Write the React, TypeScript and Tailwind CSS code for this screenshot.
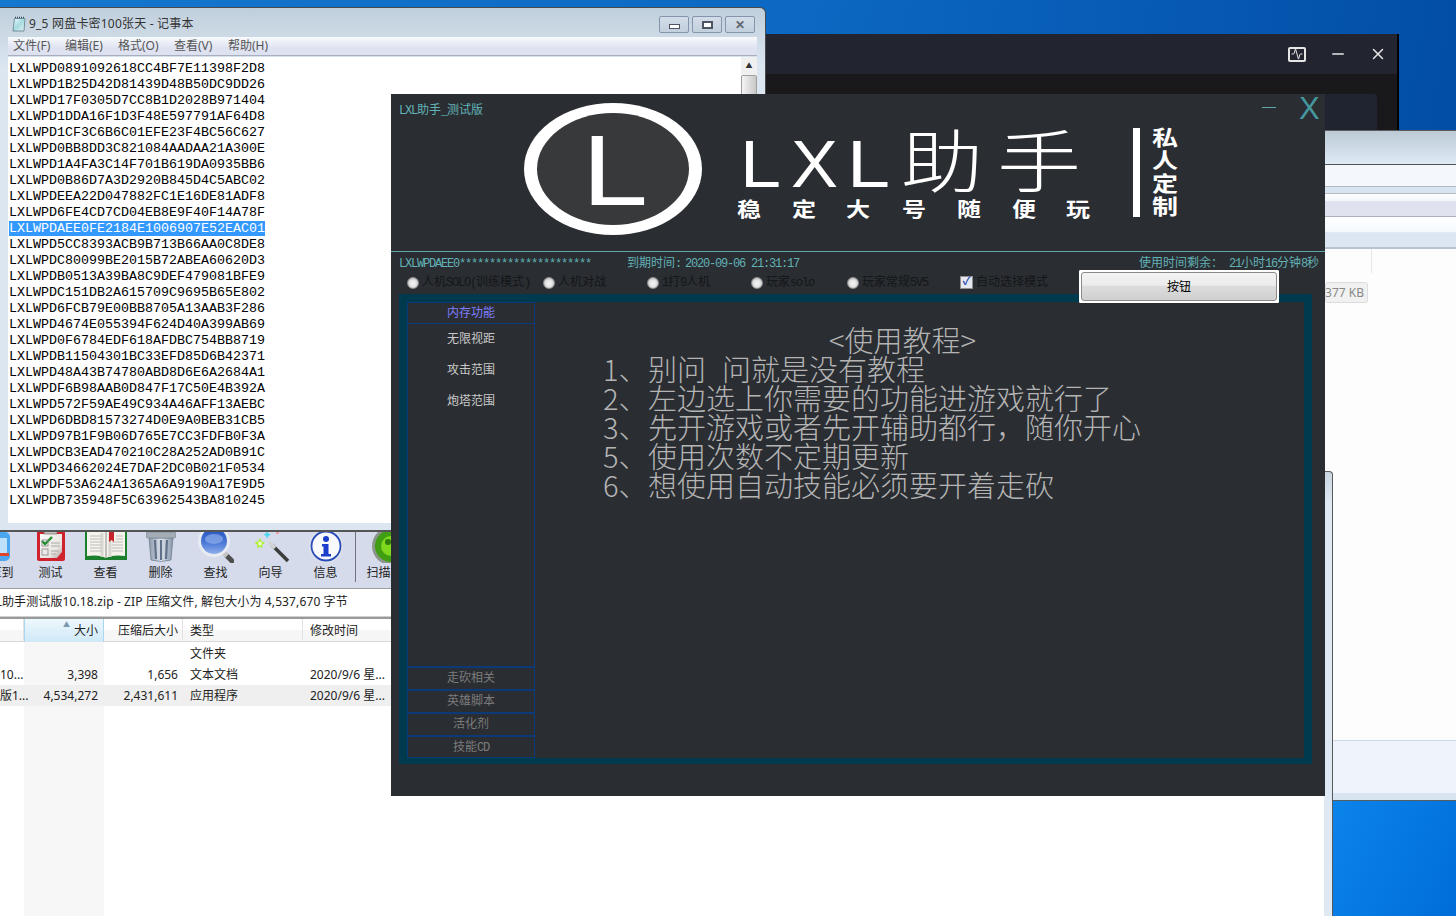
import { Activity, Minus, X } from "lucide-react";

const KEYS = [
  "LXLWPD0891092618CC4BF7E11398F2D8","LXLWPD1B25D42D81439D48B50DC9DD26","LXLWPD17F0305D7CC8B1D2028B971404","LXLWPD1DDA16F1D3F48E597791AF64D8",
  "LXLWPD1CF3C6B6C01EFE23F4BC56C627","LXLWPD0BB8DD3C821084AADAA21A300E","LXLWPD1A4FA3C14F701B619DA0935BB6","LXLWPD0B86D7A3D2920B845D4C5ABC02",
  "LXLWPDEEA22D047882FC1E16DE81ADF8","LXLWPD6FE4CD7CD04EB8E9F40F14A78F","LXLWPDAEE0FE2184E1006907E52EAC01","LXLWPD5CC8393ACB9B713B66AA0C8DE8",
  "LXLWPDC80099BE2015B72ABEA60620D3","LXLWPDB0513A39BA8C9DEF479081BFE9","LXLWPDC151DB2A615709C9695B65E802","LXLWPD6FCB79E00BB8705A13AAB3F286",
  "LXLWPD4674E055394F624D40A399AB69","LXLWPD0F6784EDF618AFDBC754BB8719","LXLWPDB11504301BC33EFD85D6B42371","LXLWPD48A43B74780ABD8D6E6A2684A1",
  "LXLWPDF6B98AAB0D847F17C50E4B392A","LXLWPD572F59AE49C934A46AFF13AEBC","LXLWPD6DBD81573274D0E9A0BEB31CB5","LXLWPD97B1F9B06D765E7CC3FDFB0F3A",
  "LXLWPDCB3EAD470210C28A252AD0B91C","LXLWPD34662024E7DAF2DC0B021F0534","LXLWPDF53A624A1365A6A9190A17E9D5","LXLWPDB735948F5C63962543BA810245",
];

/* Latin runs are half the width of the CJK runs, as in a bitmap CJK face. */
function H({ t }: { t: string }) {
  return (
    <>
      {t.split(/([\x20-\x7e]+)/).filter(Boolean).map((p, i) =>
        /^[\x20-\x7e]+$/.test(p) ? <span key={i} className="text-[12px] tracking-[-1.2px]">{p}</span> : <span key={i} className="text-[12px]">{p}</span>
      )}
    </>
  );
}

function ToolIcon({ kind }: { kind: string }) {
  if (kind === "test") return (
    <svg width="30" height="32" viewBox="0 0 30 32">
      <defs><linearGradient id="tp" x1="0" y1="0" x2="1" y2="1"><stop offset="0" stopColor="#fafafa"/><stop offset="0.7" stopColor="#e8e4e0"/><stop offset="1" stopColor="#b09a98"/></linearGradient></defs>
      <rect x="1" y="0" width="28" height="30" rx="2" fill="#d0222c"/>
      <path d="M4 3h22v18l-5 6H4z" fill="url(#tp)"/>
      <rect x="8" y="0" width="13" height="3" fill="#c8c0c0" stroke="#6a5a5a" strokeWidth="0.6"/>
      <path d="M6 10l3 3 7-7" stroke="#1d8f2c" strokeWidth="2.400" fill="none"/>
      <rect x="6" y="9" width="6" height="6" fill="none" stroke="#888" strokeWidth="0.8"/>
      <rect x="6" y="18" width="6" height="6" fill="none" stroke="#888" strokeWidth="0.8"/>
      <path d="M15 12h9M15 15h9M15 20h8M15 23h5" stroke="#aaa"/>
    </svg>
  );
  if (kind === "view") return (
    <svg width="42" height="32" viewBox="0 0 42 32">
      <rect x="0" y="0" width="42" height="29" fill="#1b7f2e"/>
      <path d="M2 0h18l1 2 1-2h18v25c-6-1-14-1-19 2-5-3-13-3-19-2z" fill="#f5f3ec"/>
      <path d="M21 2v25" stroke="#8c8c8c"/>
      <path d="M17 2v24" stroke="#d8d6d0" strokeWidth="3"/><path d="M25 2v24" stroke="#d8d6d0" strokeWidth="3"/>
      <path d="M5 5h11M5 8h11M5 11h11M5 14h11M5 17h11M5 20h11M27 11h11M27 14h11M27 17h11M27 20h11M31 5h7M31 8h7" stroke="#bcbcb8"/>
      <path d="M24 0h5v11l-2.500-2-2.500 2z" fill="#c8222c"/>
    </svg>
  );
  if (kind === "del") return (
    <svg width="30" height="32" viewBox="0 0 30 32">
      <defs><linearGradient id="bn" x1="0" y1="0" x2="1" y2="0"><stop offset="0" stopColor="#8a98aa"/><stop offset="0.5" stopColor="#dfe6ee"/><stop offset="1" stopColor="#8494a8"/></linearGradient></defs>
      <path d="M3 7h24l-2 22q-10 3-20 0z" fill="url(#bn)" stroke="#6c7a8a" strokeWidth="0.7"/>
      <rect x="0" y="1" width="30" height="6" rx="2" fill="#a4adb6" stroke="#7c8692" strokeWidth="0.7"/>
      <path d="M9 9l1 19M15 9v20M21 9l-1 19" stroke="#5f7088" strokeWidth="2.200"/>
    </svg>
  );
  if (kind === "find") return (
    <svg width="36" height="32" viewBox="0 0 36 32">
      <defs><linearGradient id="ln" x1="0" y1="0" x2="0" y2="1"><stop offset="0" stopColor="#1f52c0"/><stop offset="0.6" stopColor="#4f7cd8"/><stop offset="1" stopColor="#8fb0ea"/></linearGradient></defs>
      <path d="M29 25l5 5" stroke="#4e4e4e" strokeWidth="5" strokeLinecap="round"/>
      <path d="M26 22l3 3" stroke="#c4c4c4" strokeWidth="5"/>
      <circle cx="16" cy="10" r="16" fill="#e8ecf2"/>
      <circle cx="16" cy="10" r="13" fill="url(#ln)"/>
      <ellipse cx="16" cy="8" rx="9" ry="5" fill="#8eacea" opacity="0.7"/>
    </svg>
  );
  if (kind === "wizard") return (
    <svg width="38" height="32" viewBox="0 0 38 32">
      <path d="M20 14l16 16" stroke="#3c3c3c" strokeWidth="3.600"/>
      <path d="M17 11l6 6" stroke="#d4d4d4" strokeWidth="3.600"/>
      <path d="M8 7l1.500 3.500 3.500 1-3 2.500.5 3.500-2.500-2-3 2 .5-3.500-3-2.500 3.500-1z" fill="#a8f02c"/>
      <circle cx="8" cy="12.500" r="2" fill="#eaffc0"/>
      <path d="M15 0l1.500 2.500 2.500 1-2.500 1.500-1.500 2.500-1-2.500-2.500-1.500 2.500-1z" fill="#4ed6f0"/>
      <rect x="24" y="0" width="3" height="3" fill="#f0a0a0"/>
    </svg>
  );
  if (kind === "info") return (
    <svg width="34" height="32" viewBox="0 0 34 32">
      <circle cx="17" cy="15" r="17" fill="#dfe3ea"/>
      <circle cx="17" cy="15" r="14.500" fill="#f8f9fc" stroke="#2a4cba" strokeWidth="1.800"/>
      <circle cx="17" cy="8" r="3" fill="#1c3ecc"/>
      <path d="M13 13h6.500v10h2.500v2.500h-10v-2.500h2.500v-7.500h-1.500z" fill="#1c3ecc"/>
    </svg>
  );
  if (kind === "scan") return (
    <svg width="38" height="32" viewBox="0 0 38 32">
      <circle cx="19" cy="15" r="19" fill="#8c948c"/>
      <circle cx="19" cy="15" r="16" fill="#3f9e12"/>
      <circle cx="19" cy="15" r="10" fill="#7fd81e"/>
      <circle cx="16" cy="11" r="3" fill="#2f7d0c"/>
    </svg>
  );
  return (
    <svg width="30" height="32" viewBox="0 0 30 32"><rect x="1" y="1" width="28" height="29" rx="5" fill="#4aa6ee"/><rect x="4" y="7" width="22" height="16" fill="#bfe0fa"/><rect x="2" y="22" width="26" height="3" fill="#e0432c"/></svg>
  );
}

function Tool({ kind, label }: { kind: string; label: string }) {
  return (
    <div className="flex h-[56px] w-[55px] shrink-0 flex-col items-center justify-between pb-[8px] text-[12px] leading-[14px] text-[#222]">
      <div className="-mt-[1px] flex h-[32px] items-center"><ToolIcon kind={kind} /></div>
      <span className="whitespace-nowrap">{label}</span>
    </div>
  );
}

function Radio({ label, width }: { label: string; width: string }) {
  return (
    <div className={`flex shrink-0 items-center gap-[3px] ${width}`}>
      <span className="h-[12px] w-[12px] shrink-0 rounded-full border border-[#8f8f8f] bg-[radial-gradient(circle_at_50%_55%,#f4f4f4,#e4e4e4_45%,#9a9a9a)]" />
      <span className="whitespace-nowrap leading-[14px] text-[#141618]"><H t={label} /></span>
    </div>
  );
}

function SideRow({ label, h }: { label: string; h: string }) {
  return (
    <div className={`flex items-center justify-center border-t-2 border-[#0c3a78] text-[#7c7c7c] ${h}`}><span className="leading-[14px]"><H t={label} /></span></div>
  );
}

function SideItem({ label }: { label: string }) {
  return <div className="flex h-[31px] items-center justify-center pt-[1px] text-[12px] text-[#c8c8c8]">{label}</div>;
}

function Logo() {
  const sub = [["稳", 737], ["定", 792], ["大", 846], ["号", 902], ["随", 957], ["便", 1012], ["玩", 1066]] as const;
  const priv = [["私", 145], ["人", 168], ["定", 191], ["制", 214]] as const;
  return (
    <svg width="680" height="148" viewBox="515 97 680 148" className="block">
      <ellipse cx="613" cy="169" rx="89" ry="66" fill="#fff" />
      <ellipse cx="613" cy="169" rx="76" ry="56" fill="#38393b" />
      <text x="582" y="205" fontSize="101" fontFamily="'Liberation Sans'" fill="#fff" textLength="66" lengthAdjust="spacingAndGlyphs">L</text>
      <text x="740" y="187" fontSize="66" fontFamily="'Liberation Sans'" fill="#fff" textLength="41" lengthAdjust="spacingAndGlyphs">L</text>
      <text x="791" y="187" fontSize="66" fontFamily="'Liberation Sans'" fill="#fff" textLength="47" lengthAdjust="spacingAndGlyphs">X</text>
      <text x="847" y="187" fontSize="66" fontFamily="'Liberation Sans'" fill="#fff" textLength="43" lengthAdjust="spacingAndGlyphs">L</text>
      <text x="901" y="187" fontSize="68" fontFamily="'Noto Sans CJK SC'" fontWeight="300" fill="#fff" textLength="82" lengthAdjust="spacingAndGlyphs">助</text>
      <text x="997" y="187" fontSize="68" fontFamily="'Noto Sans CJK SC'" fontWeight="300" fill="#fff" textLength="84" lengthAdjust="spacingAndGlyphs">手</text>
      {sub.map(([c, x]) => (
        <text key={x} x={x} y="217" fontSize="20" fontFamily="'Noto Sans CJK SC'" fontWeight="700" fill="#fff" textLength="24" lengthAdjust="spacingAndGlyphs">{c}</text>
      ))}
      <rect x="1133" y="128" width="7" height="89" fill="#fff" />
      {priv.map(([c, y]) => (
        <text key={y} x="1152" y={y} fontSize="21" fontFamily="'Noto Sans CJK SC'" fontWeight="700" fill="#fff" textLength="26" lengthAdjust="spacingAndGlyphs">{c}</text>
      ))}
    </svg>
  );
}

export default function App() {
  return (
    <div className="relative h-[916px] w-[1456px] overflow-hidden bg-[linear-gradient(100deg,#1577d0_0%,#0c68c2_50%,#0048a0_100%)] font-['Noto_Sans','Noto_Sans_CJK_SC',sans-serif]">
      {/* wallpaper, lower right */}
      <div className="absolute left-[1332px] top-[800px] h-[116px] w-[124px] bg-[linear-gradient(115deg,#0b84ea,#006dd9)]" />

      {/* dark app window behind */}
      <div className="absolute left-[700px] top-[34px] h-[120px] w-[699px] border-r-2 border-black bg-[#19191b]">
        <div className="flex h-[40px] items-center justify-end gap-[22px] bg-[#222530] pr-[10px] text-[#e6e6e6]">
          <div className="mr-[1px] flex h-[15px] w-[18px] items-center justify-center rounded-[2px] border-2 border-[#e6e6e6]"><Activity size={12} strokeWidth={2} /></div>
          <Minus size={18} strokeWidth={2} />
          <X size={18} strokeWidth={2} />
        </div>
        <div className="ml-[40px] mr-[20px] mt-[20px] h-[60px] rounded-[4px] bg-[#1f2430]" />
      </div>

      {/* right window */}
      <div className="absolute left-[1200px] top-[130px] flex h-[671px] w-[256px] flex-col border-y border-[#5c5c5c] bg-white">
        <div className="h-[33px] bg-[linear-gradient(180deg,#bccad6,#deeaf4)]" />
        <div className="h-[22px] border-t border-[#555] bg-[#f4f7fb]" />
        <div className="h-[8px] border-y border-[#b4bac4] bg-[#d8e4f0]" />
        <div className="h-[23px] border-b border-[#aab2c2] bg-[linear-gradient(180deg,#fff_0%,#f4f5fa_30%,#dfe1f0_35%,#e0e2f0_100%)]" />
        <div className="h-[32px] border-b-2 border-[#b6c2d2] bg-[linear-gradient(180deg,#fff_0%,#f4f8fd_50%,#dce6f3_52%,#dce6f3_100%)]" />
        <div className="relative flex-1 bg-[#fdfdfd] pl-[125px] pt-[33px]">
          <div className="absolute left-[171px] top-0 h-[24px] w-px bg-[#e6e6e6]" />
          <div className="flex h-[21px] w-[43px] items-center justify-end overflow-hidden whitespace-nowrap rounded-[3px] border border-[#dcdcdc] bg-[#f1f1f1] pr-[3px] text-[12px] text-[#888]">377 KB</div>
        </div>
        <div className="h-[53px] border-t border-[#cad8ea] bg-[#eff3fb]" />
        <div className="h-[7px] bg-[#d8e4f0]" />
      </div>

      {/* zip window */}
      <div className="absolute left-0 top-[471px] flex h-[445px] w-[1333px] flex-col rounded-tr-[4px] border-r border-t border-[#5a5a5a] bg-[linear-gradient(180deg,#c8d5e1_0,#dfe9f4_30px)] pr-[8px]">
        <div className="h-[59px] shrink-0" />
        <div className="flex h-[58px] shrink-0 overflow-hidden border-y border-[#555] border-b-[#a0a0a0] bg-[#d5dbeb]">
          <div className="ml-[-32px] flex">
            <Tool kind="ext" label="解压到" />
            <Tool kind="test" label="测试" />
            <Tool kind="view" label="查看" />
            <Tool kind="del" label="删除" />
            <Tool kind="find" label="查找" />
            <Tool kind="wizard" label="向导" />
            <Tool kind="info" label="信息" />
          </div>
          <div className="ml-[2px] h-[50px] w-px bg-[#70757f]" />
          <div className="ml-[7px]"><Tool kind="scan" label="扫描病毒" /></div>
        </div>
        <div className="h-[28px] shrink-0 overflow-hidden whitespace-nowrap border-b border-[#cfcfcf] bg-white pt-[4px] text-[12px] leading-[18px] tracking-[0.12px] text-[#222]">
          <span className="ml-[-18px]">LXL助手测试版10.18.zip - ZIP 压缩文件, 解包大小为 4,537,670 字节</span>
        </div>
        <div className="relative min-h-0 flex-1 overflow-hidden border-t-2 border-[#9a9a9a] bg-white text-[12px] text-[#222]">
          <div className="grid h-[23px] grid-cols-[24px_80px_79px_120px_88px] border-b border-[#d8d8d8] bg-[linear-gradient(180deg,#fff_50%,#f6f6f6_50%)] leading-[23px]">
            <div className="border-r border-[#e2e2e2]" />
            <div className="relative border-x border-[#a9d8f0] bg-[linear-gradient(180deg,#eef8fd,#cfe9f7)] pr-[5px] text-right">
              <span className="absolute right-[33px] top-[-6px] text-[7px] text-[#7a97b0]">▲</span>大小
            </div>
            <div className="border-r border-[#e2e2e2] pr-[4px] text-right">压缩后大小</div>
            <div className="border-r border-[#e2e2e2] pl-[7px]">类型</div>
            <div className="pl-[7px]">修改时间</div>
          </div>
          <div className="absolute bottom-0 left-[24px] top-[23px] w-[80px] bg-[#f7f7f7]" />
          <div className="relative pt-[1px]">
            <div className="grid h-[21px] grid-cols-[24px_80px_79px_120px_88px] items-center">
              <div /><div /><div /><div className="pl-[7px]">文件夹</div><div />
            </div>
            <div className="grid h-[21px] grid-cols-[24px_80px_79px_120px_88px] items-center">
              <div className="whitespace-nowrap">10...</div><div className="pr-[6px] text-right">3,398</div><div className="pr-[5px] text-right">1,656</div><div className="pl-[7px]">文本文档</div><div className="whitespace-nowrap pl-[7px]">2020/9/6 星...</div>
            </div>
            <div className="grid h-[21px] grid-cols-[24px_80px_79px_120px_88px] items-center bg-[#efefef]">
              <div className="whitespace-nowrap">版1...</div><div className="pr-[6px] text-right">4,534,272</div><div className="pr-[5px] text-right">2,431,611</div><div className="pl-[7px]">应用程序</div><div className="whitespace-nowrap pl-[7px]">2020/9/6 星...</div>
            </div>
          </div>
        </div>
      </div>

      {/* notepad */}
      <div className="absolute left-[-10px] top-[7px] flex h-[524px] w-[776px] flex-col rounded-t-[6px] border border-[#4a4a4a] border-b-[#555] bg-[linear-gradient(180deg,#c0cfdc_0,#dbe6f1_60px,#dbe6f1_100%)] pl-[17px] pr-[8px] pb-[7px]">
        <div className="flex h-[29px] shrink-0 items-start justify-between pr-[2px]">
          <div className="ml-[3px] mt-[8px] flex items-center gap-[3px] text-[12px] leading-[16px] tracking-[0.2px] text-[#333]">
            <svg width="15" height="16" viewBox="0 0 15 16">
              <defs><linearGradient id="np" x1="0" y1="0" x2="1" y2="1"><stop offset="0" stopColor="#f2fbff"/><stop offset="0.5" stopColor="#a6dbe0"/><stop offset="1" stopColor="#e6f4f4"/></linearGradient></defs>
              <path d="M3.500 2.500h10.500l-1 12.500h-11z" fill="url(#np)" stroke="#5c7c8c" strokeWidth="0.8"/>
              <path d="M4 1.500h10" stroke="#3c4c5c" strokeDasharray="1 1" strokeWidth="1.500"/>
            </svg>
            <span>9_5 网盘卡密100张天 - 记事本</span>
          </div>
          <div className="mt-[8px] flex gap-[3px]">
            {[0, 1, 2].map((i) => (
              <div key={i} className="flex h-[17px] w-[30px] items-center justify-center rounded-[2px] border border-[#8595ad] bg-[linear-gradient(180deg,#d4dde8,#c2cfdd)]">
                {i === 0 && <div className="mt-[3px] h-[5px] w-[11px] border border-[#4f5560] bg-white" />}
                {i === 1 && <div className="h-[8px] w-[11px] border-2 border-[#4f5560] bg-white" />}
                {i === 2 && <span className="text-[12px] font-bold leading-none text-[#5c6470]">✕</span>}
              </div>
            ))}
          </div>
        </div>
        <div className="flex h-[19px] shrink-0 border-b border-[#a8b0c0] bg-[linear-gradient(180deg,#f8fafd,#dfe3f1_60%,#dde1f0)] pl-[5px] text-[12px] leading-[18px] text-[#555]">
          <span className="w-[52px]">文件(F)</span><span className="w-[53px]">编辑(E)</span><span className="w-[56px]">格式(O)</span><span className="w-[54px]">查看(V)</span><span>帮助(H)</span>
        </div>
        <div className="mt-[1px] flex min-h-0 flex-1 bg-white">
          <div className="flex-1 overflow-hidden pl-[1px] pt-[4px] font-['Liberation_Mono','Noto_Sans_CJK_SC',monospace] text-[13.33px] leading-[16px] text-black">
            {KEYS.map((k, i) => (
              <div key={k} className="h-[16px]"><span className={i === 10 ? "bg-[#3399ff] text-white" : ""}>{k}</span></div>
            ))}
          </div>
          <div className="flex w-[16px] shrink-0 flex-col bg-[#f0f0f0]">
            <div className="flex h-[18px] items-center justify-center text-[7px] text-[#333]">▲</div>
            <div className="h-[40px] rounded-[2px] border border-[#a0a0a0] bg-[linear-gradient(90deg,#f4f4f4,#c8c8c8)]" />
          </div>
        </div>
      </div>

      {/* LXL helper */}
      <div className="absolute left-[391px] top-[94px] flex h-[702px] w-[934px] flex-col bg-[#2a2d32] font-['Liberation_Mono','Noto_Sans_CJK_SC',monospace]">
        <div className="relative h-[158px] shrink-0 border-b border-[#5fa5aa]">
          <div className="absolute left-[8px] top-[9px] whitespace-nowrap leading-[14px] text-[#62b2b6]"><H t="LXL助手_测试版" /></div>
          <div className="absolute left-[124px] top-[3px]"><Logo /></div>
          <div className="absolute left-[871px] top-[13px] h-px w-[14px] bg-[#5fa5aa]" />
          <div className="absolute left-[908px] top-[-1px] font-['Liberation_Sans',sans-serif] text-[31px] leading-[32px] text-[#45979f]">X</div>
        </div>
        <div className="relative flex h-[21px] shrink-0 items-center pl-[8px] text-[#62b2b6]">
          <span className="w-[228px] shrink-0 whitespace-nowrap"><H t="LXLWPDAEE0**********************" /></span>
          <span className="whitespace-nowrap"><H t="到期时间:" /></span>
          <span className="ml-[4px] whitespace-nowrap"><H t="2020-09-06 21:31:17" /></span>
          <span className="ml-auto whitespace-nowrap pr-[6px]"><span className="text-[12px]">使用时间剩余：</span><span className="ml-[6px]"><H t="21小时16分钟8秒" /></span></span>
        </div>
        <div className="relative h-[21px] shrink-0">
          <div className="flex items-center pl-[16px] pt-[2px]">
            <Radio label="人机SOLO(训练模式)" width="w-[136px]" />
            <Radio label="人机对战" width="w-[104px]" />
            <Radio label="1打9人机" width="w-[104px]" />
            <Radio label="玩家solo" width="w-[96px]" />
            <Radio label="玩家常规5V5" width="w-[113px]" />
            <div className="flex items-center gap-[3px]">
              <span className="flex h-[13px] w-[13px] items-center justify-center border border-[#8f8f8f] bg-[#e6e8f0] text-[11px] font-bold leading-none text-[#3050b8]">✓</span>
              <span className="whitespace-nowrap text-[12px] leading-[14px] text-[#141618]">自动选择模式</span>
            </div>
          </div>
          <div className="absolute left-[688px] top-[-3px] z-10 flex h-[33px] w-[200px] items-center justify-center rounded-[1px] border border-white bg-white p-[1px]">
            <div className="flex h-full w-full items-center justify-center rounded-[3px] border border-[#8a8a8a] bg-[linear-gradient(180deg,#f3f3f3_0%,#ececec_45%,#dcdcdc_50%,#d0d0d0_100%)] pt-[3px] text-[12px] text-black">按钮</div>
          </div>
        </div>
        <div className="mx-[8px] flex h-[470px] w-[913px] border-[8px] border-b-[6px] border-[#003a4e]">
          <div className="flex w-[128px] shrink-0 flex-col border border-[#0c3a78]">
            <div className="flex h-[21px] items-center justify-center border-b border-[#0c3a78] pt-[2px] text-[12px] text-[#7f7fff]">内存功能</div>
            <SideItem label="无限视距" />
            <SideItem label="攻击范围" />
            <SideItem label="炮塔范围" />
            <div className="flex-1" />
            <SideRow label="走砍相关" h="h-[23px]" />
            <SideRow label="英雄脚本" h="h-[23px]" />
            <SideRow label="活化剂" h="h-[23px]" />
            <SideRow label="技能CD" h="h-[22px]" />
          </div>
          <div className="flex-1 pl-[68px] pt-[23px] font-['Noto_Sans_CJK_SC',sans-serif] text-[29px] font-light leading-[29px] text-[#b4b4b4]">
            <div className="pl-[226px]">&lt;使用教程&gt;</div>
            <div className="flex"><span className="w-[45px] shrink-0">1、</span><span>别问<span className="inline-block w-[16px]" />问就是没有教程</span></div>
            <div className="flex"><span className="w-[45px] shrink-0">2、</span><span>左边选上你需要的功能进游戏就行了</span></div>
            <div className="flex"><span className="w-[45px] shrink-0">3、</span><span>先开游戏或者先开辅助都行，随你开心</span></div>
            <div className="flex"><span className="w-[45px] shrink-0">5、</span><span>使用次数不定期更新</span></div>
            <div className="flex"><span className="w-[45px] shrink-0">6、</span><span>想使用自动技能必须要开着走砍</span></div>
          </div>
        </div>
      </div>
    </div>
  );
}
